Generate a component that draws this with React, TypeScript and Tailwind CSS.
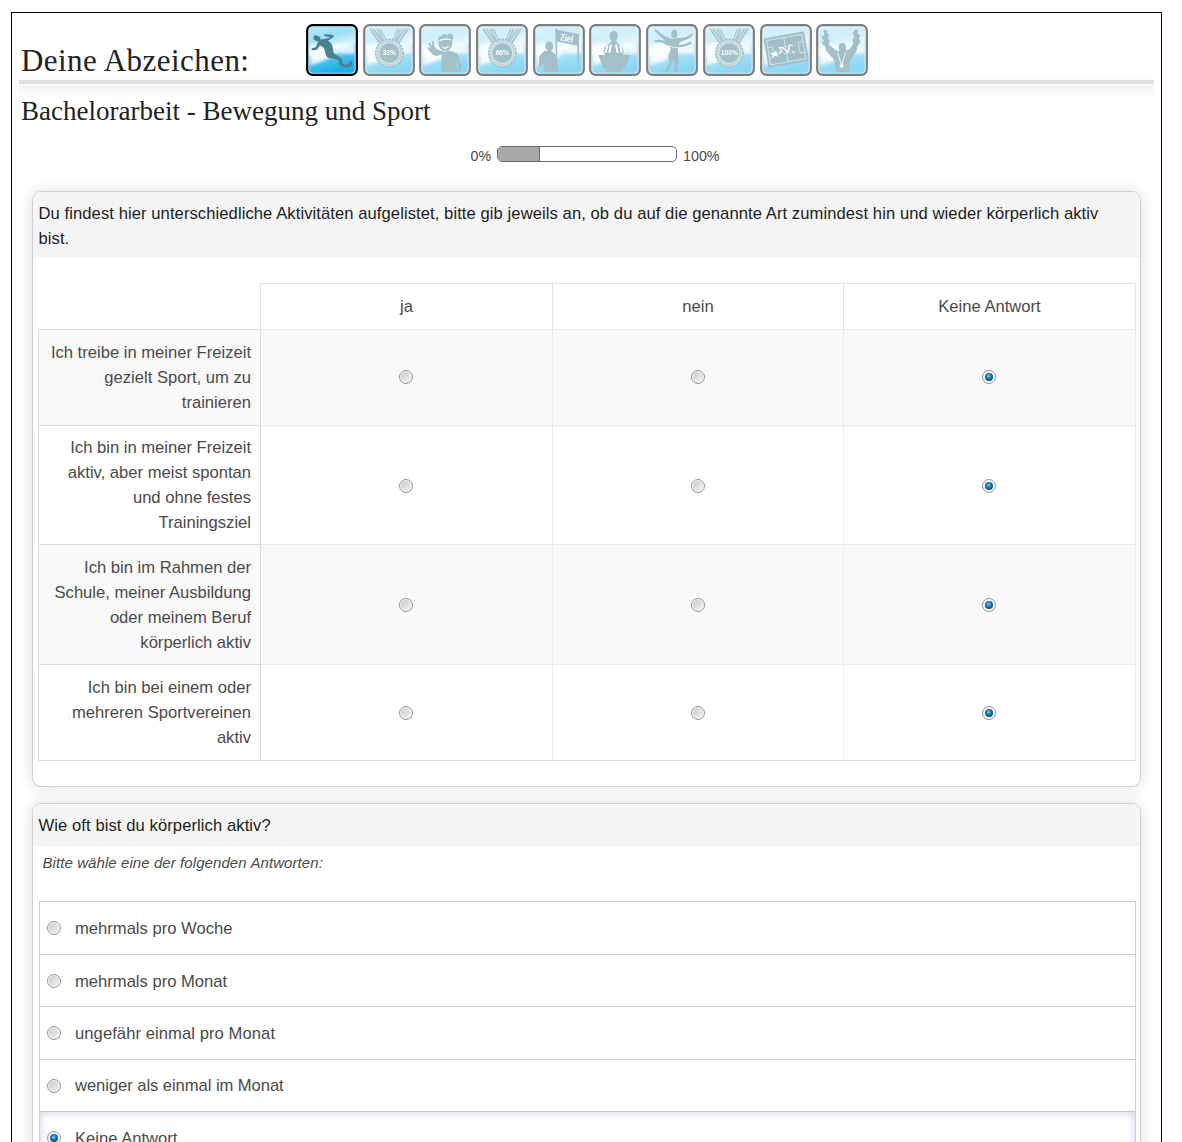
import type { ReactNode } from "react";

const INK = "#4a8191";

function Medal({ label }: { label: string }) {
  return (
    <g>
      <g opacity="0.8">
        <path d="M18 14 L34 14 L68 60 L54 68 Z M40 14 L54 14 L74 56 L64 62 Z" fill={INK} />
        <path d="M138 14 L122 14 L90 60 L104 68 Z M116 14 L102 14 L84 56 L94 62 Z" fill={INK} />
        <path d="M26 14 L60 64 M130 14 L98 64 M47 14 L70 56 M109 14 L88 56" stroke="#bfe0ea" strokeWidth="2.5" />
      </g>
      <circle cx="79" cy="87" r="41" fill="#b4d0d9" stroke={INK} strokeWidth="5" strokeDasharray="7 3" />
      <circle cx="79" cy="87" r="35" fill="none" stroke={INK} strokeWidth="2" />
      <circle cx="79" cy="87" r="30" fill={INK} />
      <text x="79" y="94" textAnchor="middle" fontSize="20" fontWeight="700" fill="#fff" fontFamily="Liberation Sans, sans-serif">
        {label}
      </text>
    </g>
  );
}

const runner = (
  <g fill={INK}>
    <ellipse cx="33" cy="43" rx="11" ry="8" transform="rotate(25 33 43)" />
    <path d="M38 50 Q46 43 58 46 Q76 54 80 68 L83 87 L104 101 Q110 105 108 112 L112 121 L123 123 L133 110 L138 112 L136 128 L122 130 L106 127 L98 119 L99 109 L76 103 Q60 102 59 90 L54 72 L42 64 L33 77 L19 79 L16 73 L29 70 L34 58 Z" />
    <path d="M52 46 L74 40 L54 36 L56 31 L80 32 L84 38 L64 52 Z" />
  </g>
);

const waver = (
  <g fill={INK}>
    <ellipse cx="79" cy="57" rx="21" ry="24" />
    <path d="M58 50 Q55 35 67 38 Q75 24 84 35 Q92 24 99 31 Q108 38 98 50 Z" />
    <path d="M56 77 L46 68 L44 50 L40 51 L39 66 L31 55 L27 58 L35 72 L26 69 L27 76 L42 93 L53 97 L68 91 L66 144 L115 144 L111 112 L122 131 L114 143 L125 143 L128 126 L115 88 L91 80 L77 83 Z" />
    <path d="M61 50 Q78 41 96 48 M70 69 Q79 77 89 67" stroke="#e3f2f7" strokeWidth="4" fill="none" />
  </g>
);

const finish = (
  <g fill={INK}>
    <ellipse cx="49" cy="67" rx="12" ry="15" />
    <path d="M37 80 L57 81 L68 94 L73 119 L77 143 L31 143 L33 119 L18 133 L18 102 Q22 87 37 80 Z" />
    <path d="M67 14 L72 14 L73 144 L68 144 Z M133 29 L138 29 L138 117 L133 117 Z" />
    <path d="M68 16 L138 31 L137 66 L70 52 Z" />
    <text x="80" y="49" fontSize="29" fontWeight="700" fill="#fff" fontFamily="Liberation Sans, sans-serif" transform="rotate(10 80 49)" textLength="39" lengthAdjust="spacingAndGlyphs">
      Ziel
    </text>
  </g>
);

const podium = (
  <g fill={INK}>
    <ellipse cx="74" cy="37" rx="12" ry="17" />
    <path d="M66 52 L83 52 L89 60 Q103 62 104 86 L99 94 L48 94 L44 82 Q45 62 62 59 Z" />
    <path d="M50 86 L55 64 M61 86 L66 62 M81 62 L86 87 M94 64 L98 86" stroke="#fff" strokeWidth="6" />
    <path d="M28 93 L124 93 L108 133 L96 136 L102 144 L47 144 L53 136 L43 133 Z" />
  </g>
);

const winner = (
  <g fill={INK}>
    <ellipse cx="85" cy="30" rx="9" ry="13" />
    <path d="M78 44 L56 37 L28 15 L24 19 L50 44 L70 62 L74 76 L67 94 L69 116 L56 143 L65 144 L82 108 L86 125 L84 144 L93 144 L97 113 L96 76 L101 55 L132 42 L142 31 L137 29 L119 40 L94 43 Z" />
    <path d="M25 50 Q47 42 66 57 Q98 72 135 52 L136 59 Q100 80 63 64 Q46 50 27 56 Z" />
    <path d="M68 65 Q100 79 136 64" stroke="#fff" strokeWidth="2" fill="none" />
  </g>
);

const board = (
  <g transform="rotate(-10 78 78)">
    <rect x="17" y="32" width="124" height="90" rx="5" fill={INK} />
    <g fill="none" stroke="#c9e3eb" strokeWidth="2">
      <rect x="25" y="40" width="108" height="74" />
      <path d="M78 40 V114 M25 61 H40 V94 H25 M133 61 H118 V94 H133" />
      <circle cx="78" cy="78" r="11" />
    </g>
    <path d="M33 82 L51 83 M54 86 L63 80 L61 67 L71 70 L82 85 L91 65 L101 70 M95 86 L103 91" stroke="#fff" strokeWidth="3.5" fill="none" />
    <path d="M29 77 L41 80 L50 74 L47 84 L53 94 L41 88 L32 93 L36 85 Z" fill="#fff" />
  </g>
);

const champion = (
  <g fill={INK}>
    <path d="M22 19 L34 19 L34 30 L40 32 L35 42 L41 51 L38 61 L58 78 L70 82 Q64 55 79 57 Q93 56 90 80 L101 76 L112 58 L109 47 L115 39 L111 28 L116 17 L126 18 L125 29 L133 34 L129 43 L134 54 L125 65 L121 82 L103 109 L100 143 L59 143 L55 109 L31 80 L27 66 L18 60 L24 49 L16 41 L25 32 Z" />
    <path d="M65 86 L77 125 L88 86" fill="none" stroke="#e8f5f9" strokeWidth="3" />
    <circle cx="77" cy="126" r="6" fill="#e8f5f9" />
  </g>
);

const badges: ReactNode[] = [
  runner,
  <Medal label="33%" />,
  waver,
  <Medal label="66%" />,
  finish,
  podium,
  winner,
  <Medal label="100%" />,
  board,
  champion,
];

function Badge({ active, index, children }: { active: boolean; index: number; children: ReactNode }) {
  const sky = "sky" + index;
  const soft = "soft" + index;
  return (
    <svg viewBox="0 0 156 156" className={active ? "size-[52px] shrink-0" : "size-[52px] shrink-0 opacity-50"}>
      <defs>
        <linearGradient id={sky} x1="0" y1="0" x2="0.25" y2="1">
          <stop offset="0" stopColor="#b9eafc" />
          <stop offset="0.3" stopColor="#9edff9" />
          <stop offset="0.55" stopColor="#d8f2fc" />
          <stop offset="0.62" stopColor="#62cbf3" />
          <stop offset="1" stopColor="#1badea" />
        </linearGradient>
        <filter id={soft} x="-30%" y="-30%" width="160%" height="160%">
          <feGaussianBlur stdDeviation="5" />
        </filter>
      </defs>
      <rect x="3" y="3" width="150" height="150" rx="18" fill={"url(#" + sky + ")"} />
      <g filter={"url(#" + soft + ")"} fill="#fff">
        <path d="M12 64 Q40 52 66 66 Q100 56 146 62 L146 90 L92 88 Q66 112 12 124 Z" opacity="0.8" />
        <ellipse cx="36" cy="94" rx="24" ry="17" opacity="0.7" />
      </g>
      {children}
      <rect x="8" y="8" width="140" height="140" rx="12" fill="none" stroke="#d5f1fc" strokeWidth="4" opacity="0.8" />
      <rect x="3.5" y="3.5" width="149" height="149" rx="16" fill="none" stroke="#000" strokeWidth="6.5" />
    </svg>
  );
}

function Radio({ checked = false }: { checked?: boolean }) {
  return (
    <span
      role="radio"
      aria-checked={checked}
      className="flex size-[14px] shrink-0 items-center justify-center rounded-full border border-[#939699] bg-[#f4f4f4]"
    >
      {checked ? (
        <span className="size-[8px] rounded-full bg-[radial-gradient(circle_at_45%_40%,#7bd3f5_0%,#1a7fb5_35%,#12344f_85%)]" />
      ) : (
        <span className="size-[10px] rounded-full bg-linear-to-br from-[#c6c9cc] to-[#f5f5f5]" />
      )}
    </span>
  );
}

const rows = [
  { lines: ["Ich treibe in meiner Freizeit", "gezielt Sport, um zu", "trainieren"], box: "h-[96px] bg-[#f9f9f9]", cell: "pb-[1px]" },
  { lines: ["Ich bin in meiner Freizeit", "aktiv, aber meist spontan", "und ohne festes", "Trainingsziel"], box: "h-[119px] bg-white", cell: "pt-[2px]" },
  { lines: ["Ich bin im Rahmen der", "Schule, meiner Ausbildung", "oder meinem Beruf", "körperlich aktiv"], box: "h-[120px] bg-[#f9f9f9]", cell: "pt-0" },
  { lines: ["Ich bin bei einem oder", "mehreren Sportvereinen", "aktiv"], box: "h-[96px] bg-white", cell: "pt-0" },
];

const answers = [
  { name: "ja", checked: false },
  { name: "nein", checked: false },
  { name: "Keine Antwort", checked: true },
];

const options = [
  { label: "mehrmals pro Woche", box: "h-[53px]" },
  { label: "mehrmals pro Monat", box: "h-[52px] pt-[1px]" },
  { label: "ungefähr einmal pro Monat", box: "h-[53px] tracking-[0.07px]" },
  { label: "weniger als einmal im Monat", box: "h-[52px] tracking-[-0.06px]" },
];

const card = "mx-auto w-[1109px] rounded-[9px] border-[1.5px] border-[#d0d0d0] bg-white shadow-[0_0_16px_rgba(0,0,0,0.13)]";

export default function App() {
  return (
    <div className="h-[1142px] w-[1182px] overflow-hidden bg-white pl-[11px] pt-[12px] font-['Liberation_Sans',Arial,sans-serif] text-[16.6px] leading-[25px] text-[#4a4a4a]">
      <main className="h-[1140px] w-[1151px] border border-black">
        <header className="mx-[7px] h-[72px]">
          <div className="flex h-[67px]">
            <h1 className="w-[287px] shrink-0 whitespace-nowrap pl-[2px] pt-[29px] font-['Liberation_Serif',serif] text-[31px] leading-[38px] tracking-[0.45px] text-[#222]">
              Deine Abzeichen:
            </h1>
            <div className="flex gap-[4.7px] pt-[11px]">
              {badges.map((art, i) => (
                <Badge key={i} index={i} active={i === 0}>
                  {art}
                </Badge>
              ))}
            </div>
          </div>
          <div className="h-[4px] bg-[#e0e0e0] shadow-[0_-3px_6px_rgba(0,0,0,0.04)]" />
          <div className="mt-px h-[14px] bg-linear-to-b from-[#f4f4f4] to-white" />
        </header>
        <h2 className="relative h-[45px] whitespace-nowrap pl-[9px] pt-[9px] font-['Liberation_Serif',serif] text-[27px] leading-[34px] text-[#222]">
          Bachelorarbeit - Bewegung und Sport
        </h2>
        <div className="flex h-[61px] items-start pl-[458px] pt-[14px] text-[14.3px] leading-[24px]">
          <span className="w-[27px] pl-[0.5px]">0%</span>
          <div className="mt-[2px] h-[16px] w-[180px] overflow-hidden rounded-[5px] border border-[#6b6b6b] bg-white">
            <div className="h-full w-[42px] border-r border-[#6b6b6b] bg-[#a9a9a9]" />
          </div>
          <span className="pl-[6px]">100%</span>
        </div>

        <section className={card + " h-[596px]"}>
          <h3 className="h-[66px] rounded-t-[8px] bg-[#f5f5f5] pl-[5.5px] pt-[9px] tracking-[0.075px] text-[#1c1c1c]">
            <span className="block whitespace-nowrap">
              Du findest hier unterschiedliche Aktivitäten aufgelistet, bitte gib jeweils an, ob du auf die genannte Art zumindest hin und wieder körperlich aktiv
            </span>
            <span className="block">bist.</span>
          </h3>
          <div className="ml-[5px] mt-[25px] w-[1097px]">
            <div className="ml-[222px] grid h-[46px] grid-cols-[292px_291px_292px] border-l border-t border-[#dfdfdf] text-center leading-[46px]">
              {answers.map((a) => (
                <div key={a.name} className="border-r border-[#e2e2e2]">
                  {a.name}
                </div>
              ))}
            </div>
            <div className="w-[1098px] border-b border-[#dedede]">
              {rows.map((row) => (
                <div key={row.lines[0]} className={row.box + " grid grid-cols-[223px_292px_291px_292px] border-t border-[#ececec]"}>
                  <div className="-mt-px flex flex-col justify-center border-x border-t border-[#dcdcdc] pr-[9px] text-right">
                    {row.lines.map((line) => (
                      <span key={line} className="block whitespace-nowrap">
                        {line}
                      </span>
                    ))}
                  </div>
                  {answers.map((a) => (
                    <div key={a.name} className={row.cell + " flex items-center justify-center border-r border-[#ececec] pr-[1px]"}>
                      <Radio checked={a.checked} />
                    </div>
                  ))}
                </div>
              ))}
            </div>
          </div>
        </section>

        <section className={card + " mt-[16px] h-[420px]"}>
          <h3 className="h-[42px] rounded-t-[8px] bg-[#f5f5f5] pl-[5.5px] pt-[9px] tracking-[0.08px] text-[#1c1c1c]">
            Wie oft bist du körperlich aktiv?
          </h3>
          <p className="h-[55px] pl-[9.5px] pt-[4px] text-[15px] italic tracking-[0.08px]">Bitte wähle eine der folgenden Antworten:</p>
          <div className="ml-[6px] w-[1097px] border-x border-[#cfcfcf]">
            {options.map((o) => (
              <div key={o.label} className={o.box + " flex items-center gap-[14px] border-t border-[#c9c9c9] pl-[7px]"}>
                <Radio />
                <span>{o.label}</span>
              </div>
            ))}
            <div className="flex h-[53px] items-center gap-[14px] border-t border-[#c4c4cc] pl-[7px] shadow-[inset_0_0_10px_rgba(90,90,170,0.3)]">
              <Radio checked />
              <span>Keine Antwort</span>
            </div>
          </div>
        </section>
      </main>
    </div>
  );
}
